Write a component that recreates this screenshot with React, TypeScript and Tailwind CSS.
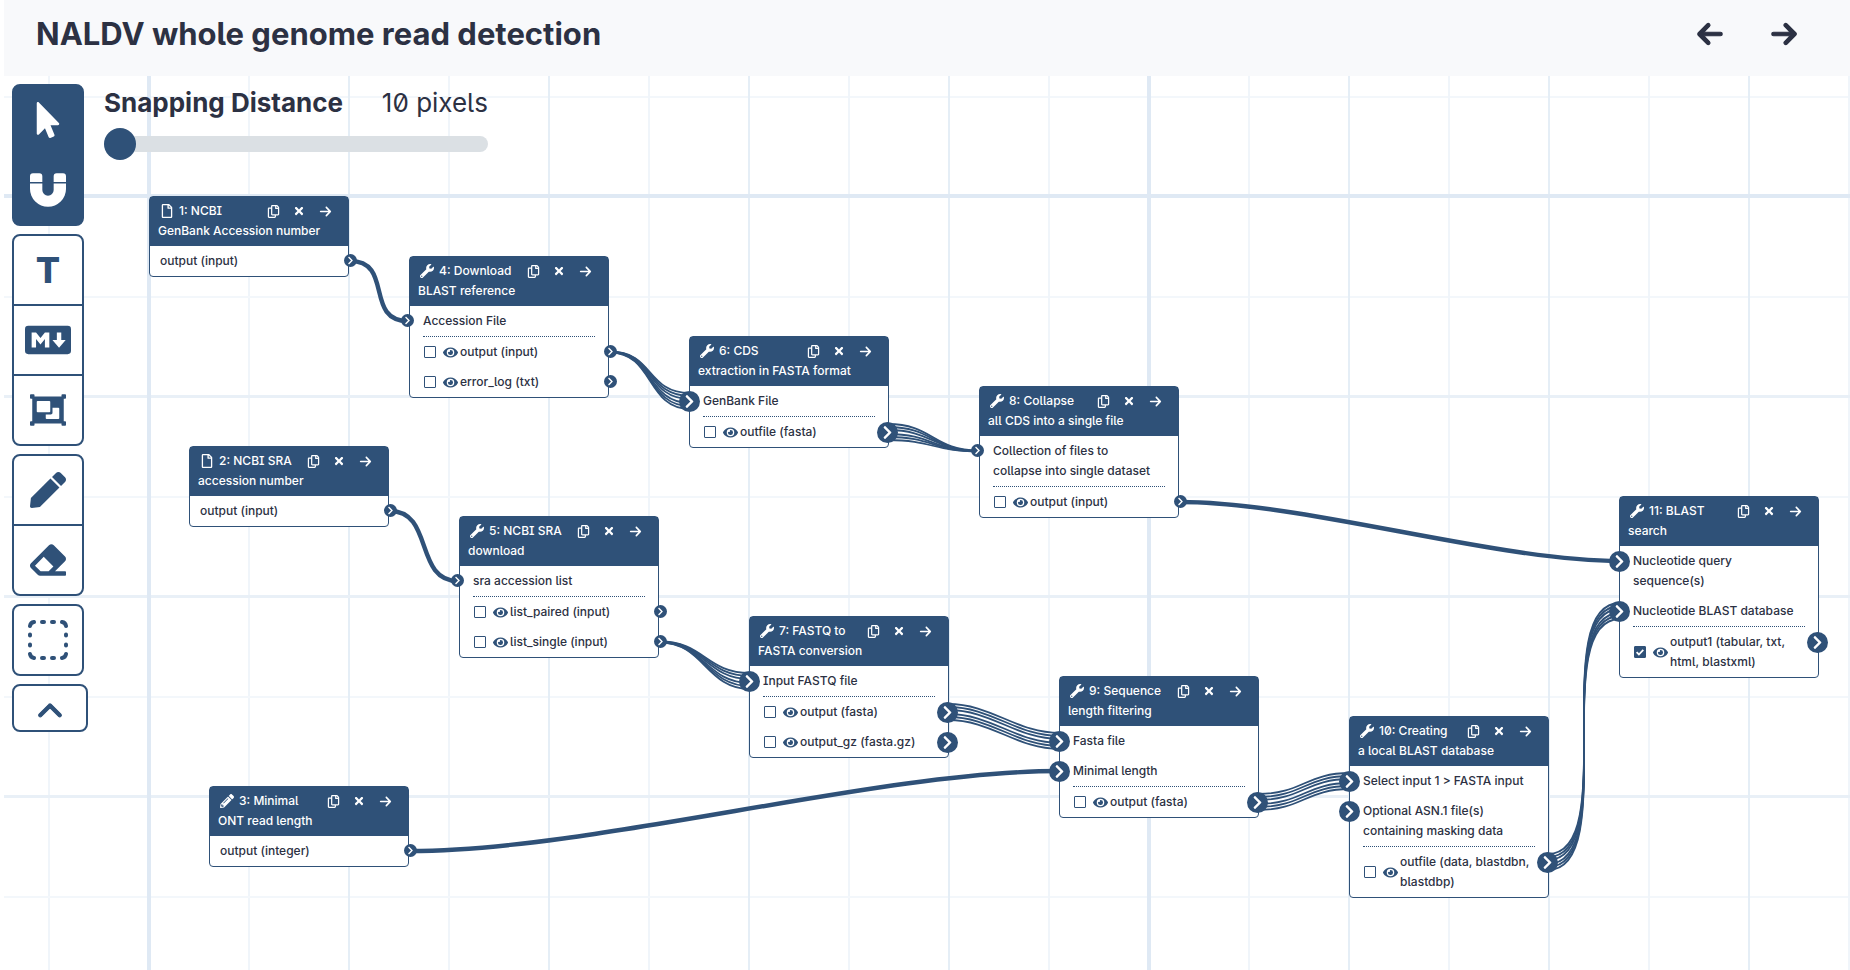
import React from "react";
import { FaArrowLeft, FaArrowRight, FaChevronUp } from "react-icons/fa6";
import {
  FaChevronRight,
  FaEraser,
  FaEye,
  FaMousePointer,
  FaObjectGroup,
  FaPen,
  FaPencilAlt,
  FaRegCopy,
  FaRegFile,
  FaTimes,
  FaWrench,
} from "react-icons/fa";
import { SiMarkdown } from "react-icons/si";

type Kind = "file" | "tool" | "param";
type Port = { lines: string[]; multi?: boolean; checked?: boolean };
type Step = {
  id: number;
  x: number;
  y: number;
  kind: Kind;
  title: [string, string];
  inputs: Port[];
  outputs: Port[];
};

const STEPS: Step[] = [
  { id: 1, x: 145, y: 120, kind: "file", title: ["NCBI", "GenBank Accession number"], inputs: [], outputs: [{ lines: ["output (input)"] }] },
  { id: 2, x: 185, y: 370, kind: "file", title: ["NCBI SRA", "accession number"], inputs: [], outputs: [{ lines: ["output (input)"] }] },
  { id: 3, x: 205, y: 710, kind: "param", title: ["Minimal", "ONT read length"], inputs: [], outputs: [{ lines: ["output (integer)"] }] },
  {
    id: 4, x: 405, y: 180, kind: "tool", title: ["Download", "BLAST reference"],
    inputs: [{ lines: ["Accession File"] }],
    outputs: [{ lines: ["output (input)"] }, { lines: ["error_log (txt)"] }],
  },
  {
    id: 5, x: 455, y: 440, kind: "tool", title: ["NCBI SRA", "download"],
    inputs: [{ lines: ["sra accession list"] }],
    outputs: [{ lines: ["list_paired (input)"] }, { lines: ["list_single (input)"] }],
  },
  {
    id: 6, x: 685, y: 260, kind: "tool", title: ["CDS", "extraction in FASTA format"],
    inputs: [{ lines: ["GenBank File"], multi: true }],
    outputs: [{ lines: ["outfile (fasta)"], multi: true }],
  },
  {
    id: 7, x: 745, y: 540, kind: "tool", title: ["FASTQ to", "FASTA conversion"],
    inputs: [{ lines: ["Input FASTQ file"], multi: true }],
    outputs: [{ lines: ["output (fasta)"], multi: true }, { lines: ["output_gz (fasta.gz)"], multi: true }],
  },
  {
    id: 8, x: 975, y: 310, kind: "tool", title: ["Collapse", "all CDS into a single file"],
    inputs: [{ lines: ["Collection of files to", "collapse into single dataset"] }],
    outputs: [{ lines: ["output (input)"] }],
  },
  {
    id: 9, x: 1055, y: 600, kind: "tool", title: ["Sequence", "length filtering"],
    inputs: [{ lines: ["Fasta file"], multi: true }, { lines: ["Minimal length"], multi: true }],
    outputs: [{ lines: ["output (fasta)"], multi: true }],
  },
  {
    id: 10, x: 1345, y: 640, kind: "tool", title: ["Creating", "a local BLAST database"],
    inputs: [
      { lines: ["Select input 1 > FASTA input"], multi: true },
      { lines: ["Optional ASN.1 file(s)", "containing masking data"], multi: true },
    ],
    outputs: [{ lines: ["outfile (data, blastdbn,", "blastdbp)"], multi: true }],
  },
  {
    id: 11, x: 1615, y: 420, kind: "tool", title: ["BLAST", "search"],
    inputs: [
      { lines: ["Nucleotide query", "sequence(s)"], multi: true },
      { lines: ["Nucleotide BLAST database"], multi: true },
    ],
    outputs: [{ lines: ["output1 (tabular, txt,", "html, blastxml)"], multi: true, checked: true }],
  },
];

// [from step, output index, to step, input index]
const LINKS: [number, number, number, number][] = [
  [1, 0, 4, 0],
  [2, 0, 5, 0],
  [4, 0, 6, 0],
  [6, 0, 8, 0],
  [5, 1, 7, 0],
  [7, 0, 9, 0],
  [3, 0, 9, 1],
  [8, 0, 11, 0],
  [9, 0, 10, 0],
  [10, 0, 11, 1],
];

const portHeight = (p: Port) => p.lines.length * 20 + 10;
const sum = (ports: Port[]) => ports.reduce((h, p) => h + portHeight(p), 0);

function inputPoint(s: Step, i: number) {
  return { x: s.x + (s.inputs[i].multi ? 1 : -1), y: s.y + 65 + sum(s.inputs.slice(0, i)) };
}
function outputPoint(s: Step, i: number) {
  const rule = s.inputs.length ? 1 : 0;
  return {
    x: s.x + (s.outputs[i].multi ? 199 : 201),
    y: s.y + 65 + sum(s.inputs) + rule + sum(s.outputs.slice(0, i)),
  };
}

function curve(x1: number, y1: number, x2: number, y2: number) {
  const c = Math.max(44, 0.28 * Math.hypot(x2 - x1, y2 - y1));
  return `M${x1} ${y1}C${x1 + c} ${y1} ${x2 - c} ${y2} ${x2} ${y2}`;
}

function Links() {
  const strands = [-8, -5, -2, 2, 5, 8];
  return (
    <svg className="pointer-events-none absolute inset-0 size-full" fill="none" stroke="#2f5178" aria-hidden="true">
      {LINKS.map(([from, o, to, i]) => {
        const src = STEPS[from - 1];
        const dst = STEPS[to - 1];
        const a = outputPoint(src, o);
        const b = inputPoint(dst, i);
        const wideStart = src.outputs[o].multi;
        const wideEnd = dst.inputs[i].multi && (wideStart || src.kind !== "param") && from !== 8;
        if (!wideStart && !wideEnd) {
          return <path key={`${from}-${to}`} d={curve(a.x, a.y, b.x, b.y)} strokeWidth={4.4} />;
        }
        return (
          <g key={`${from}-${to}`} strokeWidth={1.8}>
            {strands.map((d) => (
              <path key={d} d={curve(a.x, a.y + (wideStart ? d : d / 16), b.x, b.y + (wideEnd ? d : d / 16))} />
            ))}
          </g>
        );
      })}
    </svg>
  );
}

function GridLines() {
  const steps = Array.from({ length: 40 }, (_, i) => i);
  return (
    <svg className="pointer-events-none absolute inset-0 size-full" aria-hidden="true">
      {steps.map((i) => (
        <g key={i}>
          <rect x={44 + 200 * i} y="0" width="2" height="100%" fill="#f0f5fa" />
          <rect x="0" y={20 + 200 * i} width="100%" height="2" fill="#f3f7fb" />
        </g>
      ))}
      {steps.map((i) => (
        <g key={i}>
          <rect x={144 + 200 * i} y="0" width="2" height="100%" fill="#e5eef6" />
          <rect x="0" y={119 + 200 * i} width="100%" height="3" fill="#e9f0f7" />
        </g>
      ))}
      {[0, 1, 2, 3].map((i) => (
        <g key={i}>
          <rect x={143 + 1000 * i} y="0" width="4" height="100%" fill="#dfe9f4" />
          <rect x="0" y={118 + 1000 * i} width="100%" height="4" fill="#dfe9f4" />
        </g>
      ))}
    </svg>
  );
}

function Terminal({ side, multi, label }: { side: "in" | "out"; multi?: boolean; label: string }) {
  const place = multi
    ? side === "in" ? "-left-[11px] top-[5px] size-[21px]" : "-right-2.5 top-[5px] size-[21px]"
    : side === "in" ? "-left-[9px] top-2 size-[13px]" : "-right-[9px] top-2 size-[13px]";
  return (
    <button
      type="button"
      aria-label={label}
      className={`absolute z-10 flex items-center justify-center rounded-full bg-[#2f5178] text-white ${place}`}
    >
      <FaChevronRight className={multi ? "size-[15px]" : "size-[9px]"} />
    </button>
  );
}

const KIND_ICON = { file: FaRegFile, tool: FaWrench, param: FaPencilAlt };

function StepCard({ step }: { step: Step }) {
  const Icon = KIND_ICON[step.kind];
  const simple = step.inputs.length === 0;
  return (
    <section
      className="absolute w-[200px] rounded-[4px] border border-[#2f5178] bg-white text-[12px] leading-5 font-medium"
      style={{ left: step.x, top: step.y }}
    >
      <header className="h-[49px] bg-[#2f5178] pt-1 pl-2 text-white">
        <div className="flex items-center">
          <span className="flex w-[21px] justify-start pl-0.5">
            <Icon className="size-3.5" />
          </span>
          <h2 className="grow">
            {step.id}: {step.title[0]}
          </h2>
          <div className="mr-2.5 flex">
            <button type="button" aria-label="Duplicate step" className="flex h-5 w-[26px] items-center justify-center">
              <FaRegCopy className="size-[13px]" />
            </button>
            <button type="button" aria-label="Remove step" className="flex h-5 w-[26px] items-center justify-center">
              <FaTimes className="size-3" />
            </button>
            <button type="button" aria-label="Next" className="flex h-5 w-[26px] items-center justify-center">
              <FaArrowRight className="size-[13px]" />
            </button>
          </div>
        </div>
        <p>{step.title[1]}</p>
      </header>
      {step.inputs.map((p) => (
        <div key={p.lines[0]} className="relative py-[5px] pl-[13px] whitespace-nowrap">
          <Terminal side="in" multi={p.multi} label={`Connect to ${p.lines.join(" ")}`} />
          {p.lines.map((l) => (
            <div key={l}>{l}</div>
          ))}
        </div>
      ))}
      {!simple && <div className="mx-[13px] border-t border-dotted border-[#2f5178]" />}
      {step.outputs.map((p) => (
        <div
          key={p.lines[0]}
          className={`relative flex items-center py-[5px] whitespace-nowrap ${simple ? "pl-2.5" : "pl-3.5"}`}
        >
          {!simple && (
            <>
              <label className="relative mr-[7px] flex">
                <input
                  type="checkbox"
                  defaultChecked={p.checked}
                  aria-label={`Mark ${p.lines.join(" ")} as workflow output`}
                  className="peer size-3 appearance-none rounded-[1px] border border-[#2f5178] bg-white checked:bg-[#2f5178]"
                />
                <svg viewBox="0 0 12 12" className="pointer-events-none absolute inset-0 hidden size-3 peer-checked:block" fill="none" stroke="#fff" strokeWidth="1.8">
                  <path d="M2.6 6.2l2.3 2.3 4.4-4.6" />
                </svg>
              </label>
              <button type="button" aria-label="Toggle visibility" className="mr-0.5">
                <FaEye className="size-[15px] text-[#2f5178]" />
              </button>
            </>
          )}
          <div>
            {p.lines.map((l) => (
              <div key={l}>{l}</div>
            ))}
          </div>
          <Terminal side="out" multi={p.multi} label={`Output ${p.lines.join(" ")}`} />
        </div>
      ))}
    </section>
  );
}

function MagnetIcon() {
  return (
    <svg viewBox="0 0 36.5 34" className="h-[34px] w-9" fill="currentColor" aria-hidden="true">
      <path d="M0 9V3a3 3 0 0 1 3-3h6.500a3 3 0 0 1 3 3v6zM24 9V3a3 3 0 0 1 3-3h6.500a3 3 0 0 1 3 3v6z" />
      <path d="M0 10.500h12.500v6.500a5.750 5.750 0 0 0 11.500 0v-6.500h12.500v5.500a18.250 18 0 0 1-36.500 0z" />
    </svg>
  );
}

function MarqueeIcon() {
  return (
    <svg viewBox="0 0 40 40" className="size-10" fill="none" stroke="currentColor" strokeWidth="4" strokeLinecap="round" aria-hidden="true">
      <path d="M2 6Q2.500 2.500 6 2M34 2Q37.500 2.500 38 6M38 34Q37.500 37.500 34 38M6 38Q2.500 37.500 2 34" />
      <path d="M14 2h2M24 2h2M14 38h2M24 38h2M2 14.500v1M2 24.500v1M38 14.500v1M38 24.500v1" />
    </svg>
  );
}

function Tool({ label, active, children }: { label: string; active?: boolean; children: React.ReactNode }) {
  return (
    <button
      type="button"
      aria-label={label}
      aria-pressed={!!active}
      className={`-mt-0.5 flex h-[72px] w-[72px] items-center justify-center border-2 border-[#2f5178] first:mt-0 first:rounded-t-lg last:rounded-b-lg ${
        active ? "bg-[#2f5178] text-white" : "bg-white text-[#2f5178]"
      }`}
    >
      {children}
    </button>
  );
}

function ToolBar() {
  return (
    <nav aria-label="Editor tools" className="absolute top-2 left-2 z-20 flex flex-col items-start gap-2">
      <div className="flex flex-col">
        <Tool label="Select" active>
          <FaMousePointer className="size-9" />
        </Tool>
        <Tool label="Snapping" active>
          <MagnetIcon />
        </Tool>
      </div>
      <div className="flex flex-col">
        <Tool label="Add text comment">
          <span className="text-[36px] leading-none font-extrabold">T</span>
        </Tool>
        <Tool label="Add markdown comment">
          <SiMarkdown className="size-[46px]" />
        </Tool>
        <Tool label="Add frame">
          <FaObjectGroup className="size-9" />
        </Tool>
      </div>
      <div className="flex flex-col">
        <Tool label="Draw">
          <FaPen className="size-9" />
        </Tool>
        <Tool label="Erase">
          <FaEraser className="size-9" />
        </Tool>
      </div>
      <div className="flex flex-col">
        <Tool label="Box select">
          <MarqueeIcon />
        </Tool>
      </div>
      <button
        type="button"
        aria-label="Hide tools"
        className="flex h-12 w-[76px] items-center justify-center rounded-lg border-2 border-[#2f5178] bg-white pt-2 text-[#2f5178]"
      >
        <FaChevronUp className="size-[26px]" stroke="currentColor" strokeWidth="20" />
      </button>
    </nav>
  );
}

function SnapPanel() {
  const [distance, setDistance] = React.useState(10);
  return (
    <div className="absolute top-2 left-[100px] z-20 w-96">
      <div className="flex items-center justify-between text-[26px] leading-[38px]">
        <label htmlFor="snap" className="font-bold">
          Snapping Distance
        </label>
        <output htmlFor="snap">{distance} pixels</output>
      </div>
      <input
        id="snap"
        type="range"
        min={10}
        max={200}
        step={10}
        value={distance}
        onChange={(e) => setDistance(Number(e.target.value))}
        className="mt-1.5 block h-8 w-full appearance-none bg-transparent [&::-webkit-slider-runnable-track]:h-4 [&::-webkit-slider-runnable-track]:rounded-full [&::-webkit-slider-runnable-track]:bg-[#dbe0e4] [&::-webkit-slider-thumb]:-mt-2 [&::-webkit-slider-thumb]:size-8 [&::-webkit-slider-thumb]:appearance-none [&::-webkit-slider-thumb]:rounded-full [&::-webkit-slider-thumb]:bg-[#2f5178]"
      />
    </div>
  );
}

export default function App() {
  return (
    <div className="flex h-screen flex-col bg-white pl-1 font-['Inter','Liberation_Sans',sans-serif] text-[#2c3143] [font-feature-settings:'ss02','zero']">
      <header className="flex h-[76px] shrink-0 items-center justify-between bg-[#f8f9fb] pr-[52px] pb-2 pl-8">
        <h1 className="text-[31px] leading-10 font-bold">NALDV whole genome read detection</h1>
        <div className="flex gap-[46px]">
          <button type="button" aria-label="Undo">
            <FaArrowLeft className="size-7" stroke="currentColor" strokeWidth="20" />
          </button>
          <button type="button" aria-label="Redo">
            <FaArrowRight className="size-7" stroke="currentColor" strokeWidth="20" />
          </button>
        </div>
      </header>
      <main className="relative grow overflow-hidden">
        <GridLines />
        {STEPS.map((s) => (
          <StepCard key={s.id} step={s} />
        ))}
        <Links />
        <ToolBar />
        <SnapPanel />
      </main>
    </div>
  );
}
